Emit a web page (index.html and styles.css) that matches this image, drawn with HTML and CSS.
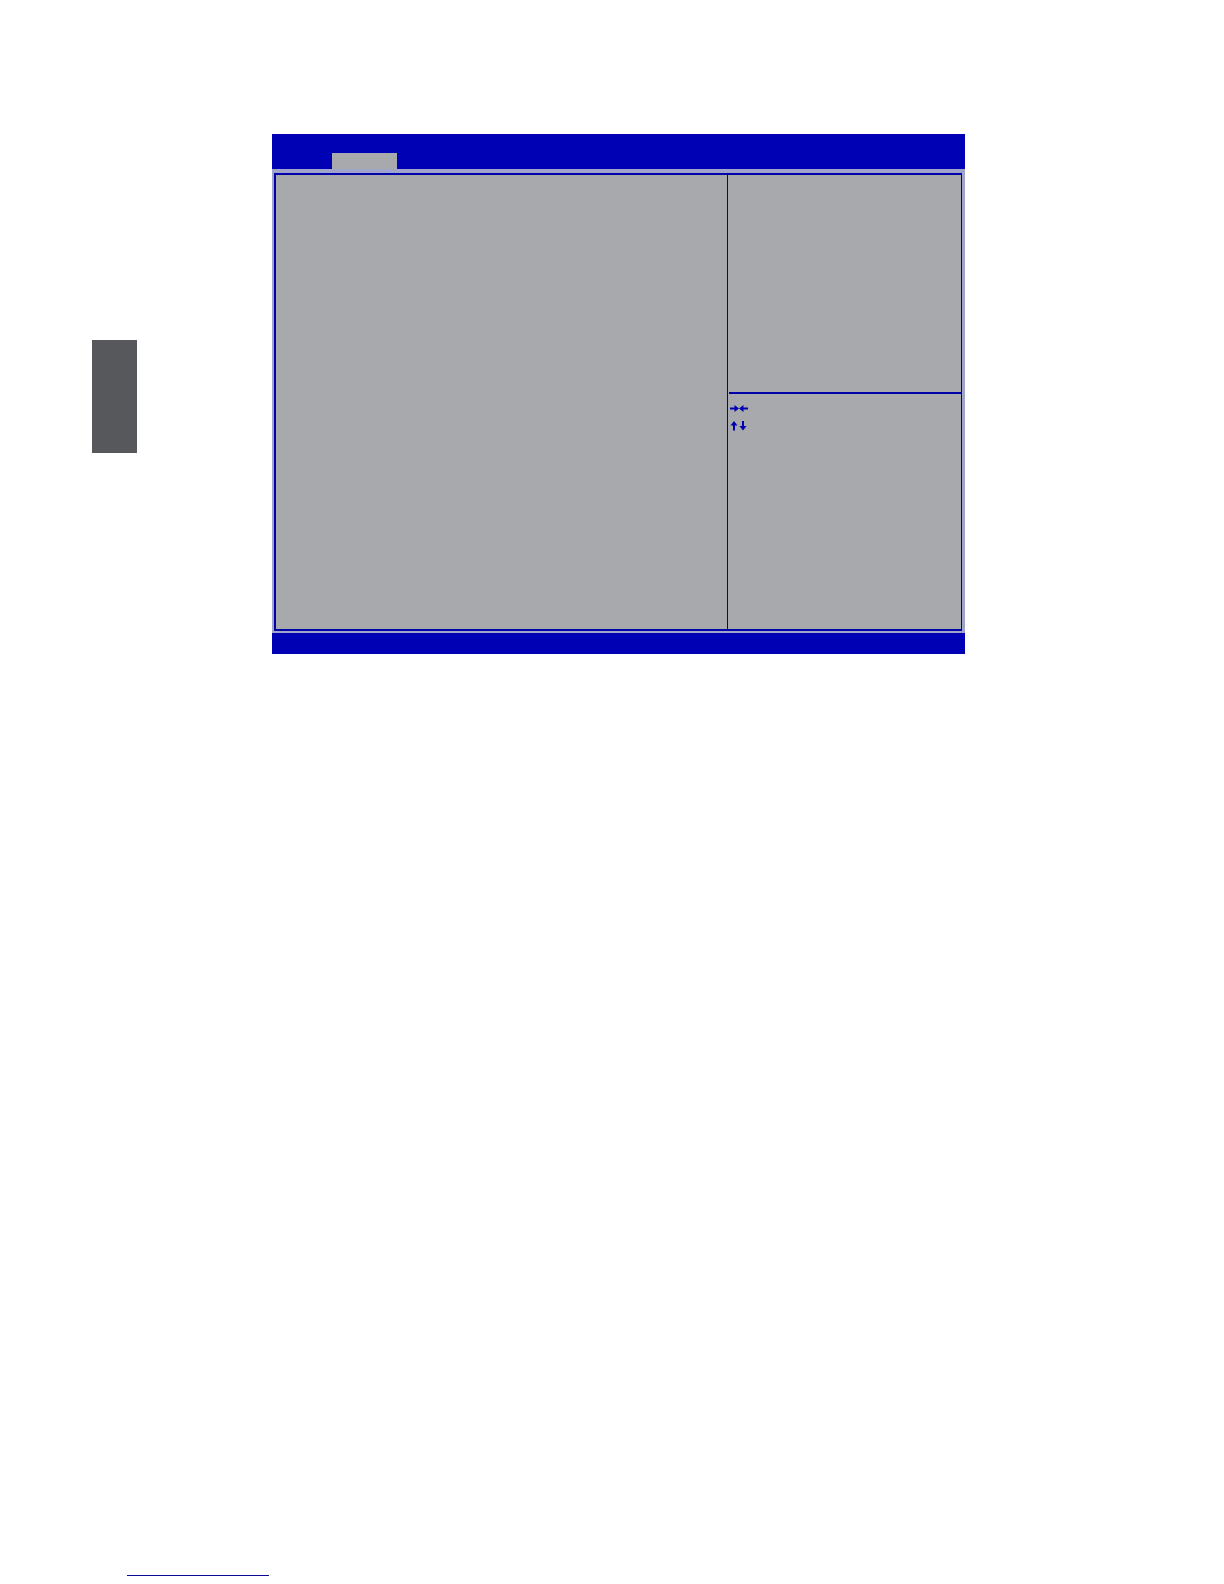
FILE: index.html
```
<!DOCTYPE html>
<html lang="en">
<head>
<meta charset="utf-8">
<title>BIOS Setup</title>
<link rel="stylesheet" href="styles.css">
</head>
<body>

<main class="content">
    <div class="side-tab"></div>

    <div class="bios">
        <div class="bios-header">
            <div class="active-tab"></div>
        </div>
        <div class="bios-body">
            <div class="settings"></div>
            <div class="sidebar">
                <div class="help"></div>
                <div class="keys">
                    <!-- left / right -->
                    <svg class="key-icon" width="18" height="8" viewBox="0 0 18 8">
                        <path d="M0 4.5H6M18 4.5H12" stroke="#0000b0" stroke-width="2"/>
                        <path d="M4.5 1L9 4.5L4.5 8ZM13.5 1L9 4.5L13.5 8Z" fill="#0000b0"/>
                    </svg>
                    <!-- up / down -->
                    <svg class="key-icon" width="18" height="10" viewBox="0 0 18 10">
                        <path d="M4 9.5V3M13 0V7" stroke="#0000b0" stroke-width="2"/>
                        <path d="M0.5 4.5L4 0L7.5 4.5ZM9.5 5L13 9.5L16.5 5Z" fill="#0000b0"/>
                    </svg>
                </div>
            </div>
        </div>
        <div class="bios-footer"></div>
    </div>
</main>

<footer class="page-footer">
    <div class="footer-line"></div>
</footer>

</body>
</html>
```
FILE: styles.css
```
body {
    margin: 0;
    min-height: 100vh;
    display: flex;
    flex-direction: column;
    background: #fff;
    font-family: "Liberation Sans", Arial, sans-serif;
}
.content {
    display: flex;
    align-items: flex-start;
    gap: 135px;
    padding: 134px 259px 0 92px;
}
.side-tab {
    width: 45px;
    height: 113px;
    margin-top: 206px;
    background: #57585b;
}
.bios {
    flex: 1;
    background: #a0a4cc;
}
.bios-header {
    height: 35px;
    padding-left: 60px;
    display: flex;
    align-items: flex-end;
    background: #0000b4;
}
.active-tab {
    width: 65px;
    height: 16px;
    background: #a7a9ac;
}
.bios-body {
    display: flex;
    min-height: 454px;
    margin: 4px 3px 2px 2px;
    border: 2px solid #0000a8;
    border-right-width: 1px;
    background: #a7a9ac;
}
.settings {
    flex: 1;
    border-right: 1px solid #0000a8;
}
.sidebar {
    width: 233px;
    padding-left: 1px;
    box-sizing: border-box;
}
.help {
    height: 217px;
    border-bottom: 2px solid #0000a8;
}
.keys {
    display: flex;
    flex-direction: column;
    gap: 9px;
    padding: 10px 1px;
}
.key-icon {
    display: block;
}
.bios-footer {
    height: 21px;
    background: #0000b4;
}
.page-footer {
    margin-top: auto;
    padding: 0 127px 8px;
}
.footer-line {
    width: 142px;
    border-bottom: 1px solid #0a0a96;
}
```
